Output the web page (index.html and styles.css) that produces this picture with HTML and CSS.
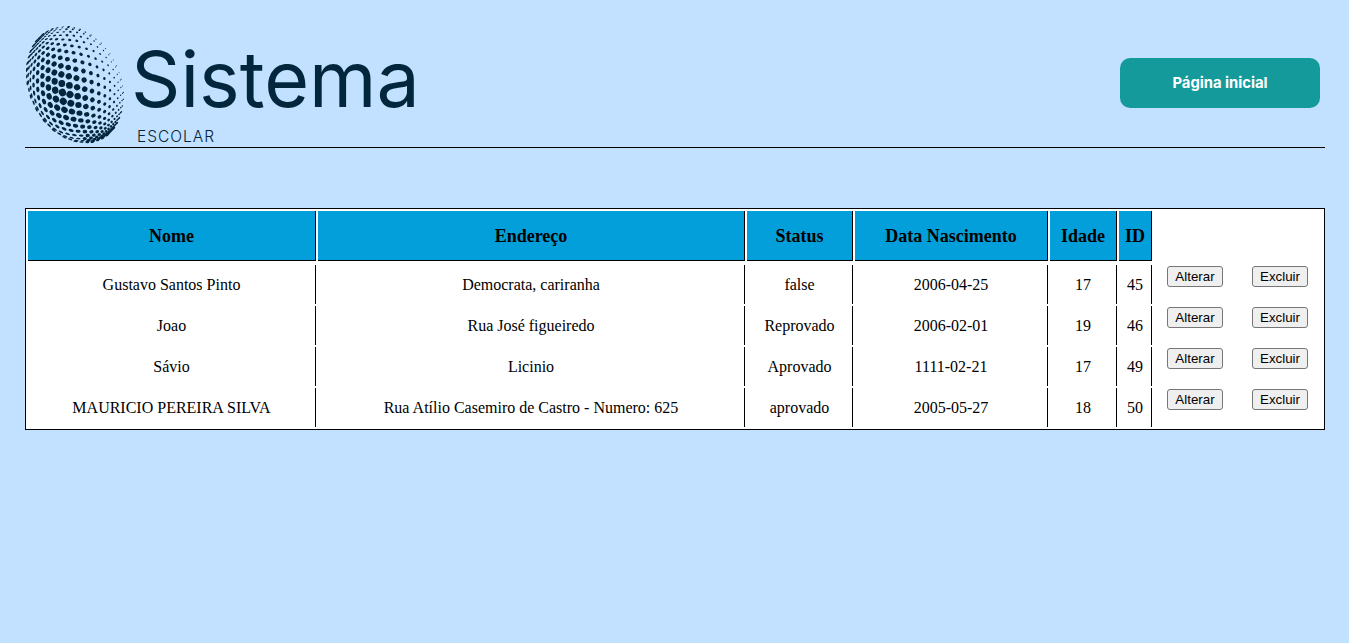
FILE: index.html
```html
<!DOCTYPE html>
<html lang="pt-BR">
<head>
<meta charset="utf-8">
<title>Sistema Escolar</title>
<link rel="stylesheet" href="styles.css">
</head>
<body>
<div class="page">
  <header class="topo">
    <div class="marca">
      <svg id="globo" class="globo" width="98" height="118" viewBox="0 0 98 118" aria-hidden="true"></svg>
      <div class="marca-texto">
        <div class="titulo">Sistema</div>
        <div class="subtitulo">ESCOLAR</div>
      </div>
    </div>
    <a class="inicio" href="#">Página inicial</a>
  </header>
  <table class="alunos">
    <colgroup>
      <col class="c-nome"><col class="c-end"><col class="c-status"><col class="c-data"><col class="c-idade"><col class="c-id"><col class="c-alt"><col class="c-exc">
    </colgroup>
    <thead>
      <tr>
        <th>Nome</th><th>Endereço</th><th>Status</th><th>Data Nascimento</th><th>Idade</th><th>ID</th>
      </tr>
      <tr class="vao"></tr>
    </thead>
    <tbody>
      <tr><td>Gustavo Santos Pinto</td><td>Democrata, cariranha</td><td>false</td><td>2006-04-25</td><td>17</td><td>45</td><td class="acao"><button class="btn">Alterar</button></td><td class="acao"><button class="btn">Excluir</button></td></tr>
      <tr><td>Joao</td><td>Rua José figueiredo</td><td>Reprovado</td><td>2006-02-01</td><td>19</td><td>46</td><td class="acao"><button class="btn">Alterar</button></td><td class="acao"><button class="btn">Excluir</button></td></tr>
      <tr><td>Sávio</td><td>Licinio</td><td>Aprovado</td><td>1111-02-21</td><td>17</td><td>49</td><td class="acao"><button class="btn">Alterar</button></td><td class="acao"><button class="btn">Excluir</button></td></tr>
      <tr><td>MAURICIO PEREIRA SILVA</td><td>Rua Atílio Casemiro de Castro - Numero: 625</td><td>aprovado</td><td>2005-05-27</td><td>18</td><td>50</td><td class="acao"><button class="btn">Alterar</button></td><td class="acao"><button class="btn">Excluir</button></td></tr>
    </tbody>
  </table>
</div>
<script src="globo.js"></script>
</body>
</html>
```
FILE: styles.css
```css
* { box-sizing: border-box; }
html, body { margin: 0; height: 100%; }
body { background: #c2e0ff; color: #000; font-family: "Liberation Serif", "Times New Roman", serif; font-size: 16px; }
.page { padding: 0 24px 0 25px; }
.topo { display: flex; justify-content: space-between; align-items: flex-start; height: 148px; border-bottom: 1px solid #000; padding-right: 5px; }
.marca { display: flex; align-items: flex-start; padding-top: 26px; }
.globo { display: block; flex: none; margin-left: 1px; }
.marca-texto { margin-left: 7px; color: #02263c; font-family: Inter, "Liberation Sans", sans-serif; }
.titulo { font-size: 77px; line-height: 94px; font-weight: 400; margin-top: 6px; }
.subtitulo { font-size: 15.5px; line-height: 18px; font-weight: 300; margin: 2px 0 0 6px; letter-spacing: 1px; }
.inicio { display: flex; align-items: center; justify-content: center; width: 200px; height: 50px; margin-top: 58px; padding-bottom: 1px; background: #159a9c; border-radius: 10px; color: #fff; font-family: Inter, "Liberation Sans", sans-serif; font-size: 14.8px; font-weight: 700; text-decoration: none; }
.alunos { width: 1300px; margin-top: 60px; table-layout: fixed; border: 1px solid #000; border-collapse: separate; border-spacing: 2px; background: #fff; }
.c-nome { width: 288px; } .c-end { width: 427px; } .c-status { width: 106px; } .c-data { width: 193px; } .c-idade { width: 67px; } .c-id { width: 33px; } .c-alt { width: 82px; } .c-exc { width: 84px; }
.alunos th { height: 50px; padding: 1px 0 0; background: #039fdb; border-right: 1px solid #000; border-bottom: 1px solid #000; font-size: 18px; font-weight: 700; text-align: center; vertical-align: middle; }
.vao { height: 0; }
.alunos td { height: 39px; padding: 1px 0 0; border-right: 1px solid #000; text-align: center; vertical-align: middle; }
.alunos td.acao { border-right: 0; vertical-align: top; padding-top: 1px; }
.btn { display: block; width: 56px; height: 21px; margin: 0 auto; padding: 0; border: 1px solid #767676; border-radius: 3px; background: #efefef; color: #000; font-family: "Liberation Sans", Arial, sans-serif; font-size: 13.333px; line-height: 17px; }
```
FILE: globo.js
```js
(function () {
  var svg = document.getElementById('globo');
  var NS = 'http://www.w3.org/2000/svg';
  var cx = 49, cy = 58.5, R = 58, sx = 0.82, lean = 0.17;
  var tilt = -0.62, c = Math.cos(tilt), s = Math.sin(tilt);
  var rows = 27, cols = 29;
  for (var i = 1; i < rows; i++) {
    var lat = -Math.PI / 2 + Math.PI * i / rows;
    for (var j = 0; j < cols; j++) {
      var lon = (j + (i % 2) * 0.5) * 2 * Math.PI / cols;
      var x = Math.cos(lat) * Math.sin(lon);
      var y = Math.sin(lat);
      var z = Math.cos(lat) * Math.cos(lon);
      if (z <= 0.03) continue;
      var rx = x * c - y * s;
      var ry = x * s + y * c;
      var d = Math.hypot((rx + 0.3) * 1.08, ry - 0.18);
      var size = 3.9 * (1 - Math.pow(d / 1.62, 1.15));
      if (size < 0.35) continue;
      var px = cx + rx * R * sx + ry * R * lean;
      var py = cy + ry * R;
      var f = rx > 0 ? Math.max(0.8, z) : Math.max(0.35, z);
      var ang = Math.atan2(ry, rx) * 180 / Math.PI;
      var e = document.createElementNS(NS, 'ellipse');
      e.setAttribute('cx', px.toFixed(2));
      e.setAttribute('cy', py.toFixed(2));
      e.setAttribute('rx', (size * f).toFixed(2));
      e.setAttribute('ry', size.toFixed(2));
      e.setAttribute('transform', 'rotate(' + ang.toFixed(1) + ' ' + px.toFixed(2) + ' ' + py.toFixed(2) + ')');
      e.setAttribute('fill', '#02263c');
      svg.appendChild(e);
    }
  }
})();
```
